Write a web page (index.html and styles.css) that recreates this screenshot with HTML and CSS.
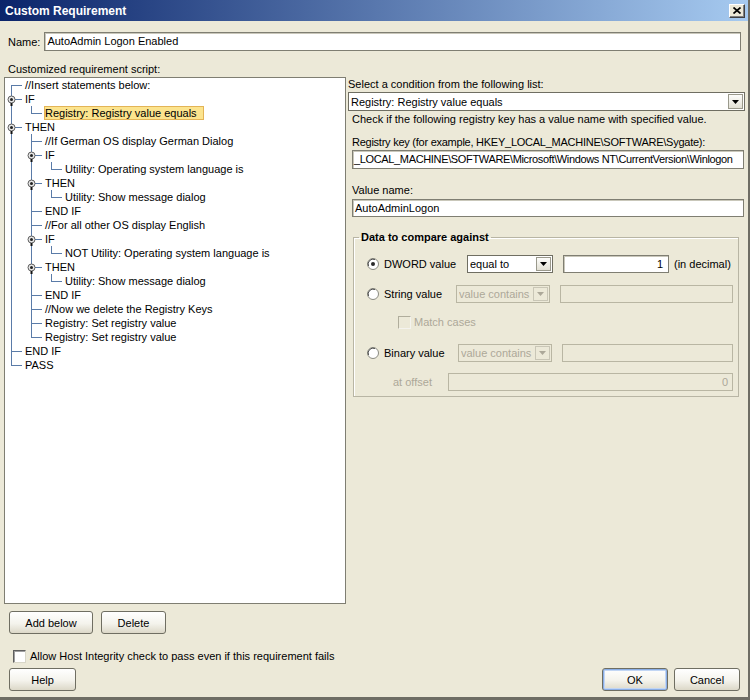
FILE: index.html
```html
<!DOCTYPE html>
<html>
<head>
<meta charset="utf-8">
<title>Custom Requirement</title>
<link rel="stylesheet" href="styles.css">
</head>
<body>
<div class="window">
  <div class="titlebar">
    <span class="title">Custom Requirement</span>
    <span class="close-btn"><svg width="8" height="7" viewBox="0 0 8 7"><path d="M0.5 0.5L7.5 6.5M7.5 0.5L0.5 6.5" stroke="#000" stroke-width="1.7"/></svg></span>
  </div>
  <div class="content">
    <div class="name-row"><span class="lbl">Name:</span><div class="field name-field">AutoAdmin Logon Enabled</div></div>
    <div class="script-label">Customized requirement script:</div>
    <div class="main">
      <div class="tree">
        <div class="row"><span class="g g-f"></span><span class="txt">//Insert statements below:</span></div>
        <div class="row"><span class="g g-v"><svg width="20" height="14" viewBox="0 0 20 14"><rect x="10" y="7" width="7" height="1" fill="#5a7ba8"/><circle cx="6.5" cy="7.5" r="3.5" fill="#e6e6e6" stroke="#5e5e5e"/><circle cx="6.5" cy="7.5" r="1.5" fill="#222"/><rect x="5.5" y="11" width="2" height="3" fill="#111"/></svg></span><span class="txt">IF</span></div>
        <div class="row"><span class="g g-v"></span><span class="g g-l"></span><span class="txt sel">Registry: Registry value equals</span></div>
        <div class="row"><span class="g g-v"><svg width="20" height="14" viewBox="0 0 20 14"><rect x="10" y="7" width="7" height="1" fill="#5a7ba8"/><circle cx="6.5" cy="7.5" r="3.5" fill="#e6e6e6" stroke="#5e5e5e"/><circle cx="6.5" cy="7.5" r="1.5" fill="#222"/><rect x="5.5" y="11" width="2" height="3" fill="#111"/></svg></span><span class="txt">THEN</span></div>
        <div class="row"><span class="g g-v"></span><span class="g g-t"></span><span class="txt">//If German OS display German Dialog</span></div>
        <div class="row"><span class="g g-v"></span><span class="g g-v"><svg width="20" height="14" viewBox="0 0 20 14"><rect x="10" y="7" width="7" height="1" fill="#5a7ba8"/><circle cx="6.5" cy="7.5" r="3.5" fill="#e6e6e6" stroke="#5e5e5e"/><circle cx="6.5" cy="7.5" r="1.5" fill="#222"/><rect x="5.5" y="11" width="2" height="3" fill="#111"/></svg></span><span class="txt">IF</span></div>
        <div class="row"><span class="g g-v"></span><span class="g g-v"></span><span class="g g-l"></span><span class="txt">Utility: Operating system language is</span></div>
        <div class="row"><span class="g g-v"></span><span class="g g-v"><svg width="20" height="14" viewBox="0 0 20 14"><rect x="10" y="7" width="7" height="1" fill="#5a7ba8"/><circle cx="6.5" cy="7.5" r="3.5" fill="#e6e6e6" stroke="#5e5e5e"/><circle cx="6.5" cy="7.5" r="1.5" fill="#222"/><rect x="5.5" y="11" width="2" height="3" fill="#111"/></svg></span><span class="txt">THEN</span></div>
        <div class="row"><span class="g g-v"></span><span class="g g-v"></span><span class="g g-l"></span><span class="txt">Utility: Show message dialog</span></div>
        <div class="row"><span class="g g-v"></span><span class="g g-t"></span><span class="txt">END IF</span></div>
        <div class="row"><span class="g g-v"></span><span class="g g-t"></span><span class="txt">//For all other OS display English</span></div>
        <div class="row"><span class="g g-v"></span><span class="g g-v"><svg width="20" height="14" viewBox="0 0 20 14"><rect x="10" y="7" width="7" height="1" fill="#5a7ba8"/><circle cx="6.5" cy="7.5" r="3.5" fill="#e6e6e6" stroke="#5e5e5e"/><circle cx="6.5" cy="7.5" r="1.5" fill="#222"/><rect x="5.5" y="11" width="2" height="3" fill="#111"/></svg></span><span class="txt">IF</span></div>
        <div class="row"><span class="g g-v"></span><span class="g g-v"></span><span class="g g-l"></span><span class="txt">NOT Utility: Operating system language is</span></div>
        <div class="row"><span class="g g-v"></span><span class="g g-v"><svg width="20" height="14" viewBox="0 0 20 14"><rect x="10" y="7" width="7" height="1" fill="#5a7ba8"/><circle cx="6.5" cy="7.5" r="3.5" fill="#e6e6e6" stroke="#5e5e5e"/><circle cx="6.5" cy="7.5" r="1.5" fill="#222"/><rect x="5.5" y="11" width="2" height="3" fill="#111"/></svg></span><span class="txt">THEN</span></div>
        <div class="row"><span class="g g-v"></span><span class="g g-v"></span><span class="g g-l"></span><span class="txt">Utility: Show message dialog</span></div>
        <div class="row"><span class="g g-v"></span><span class="g g-t"></span><span class="txt">END IF</span></div>
        <div class="row"><span class="g g-v"></span><span class="g g-t"></span><span class="txt">//Now we delete the Registry Keys</span></div>
        <div class="row"><span class="g g-v"></span><span class="g g-t"></span><span class="txt">Registry: Set registry value</span></div>
        <div class="row"><span class="g g-v"></span><span class="g g-l"></span><span class="txt">Registry: Set registry value</span></div>
        <div class="row"><span class="g g-t"></span><span class="txt">END IF</span></div>
        <div class="row"><span class="g g-l"></span><span class="txt">PASS</span></div>
      </div>
      <div class="props">
        <div class="plabel">Select a condition from the following list:</div>
        <div class="combo main-combo"><span class="combo-text">Registry: Registry value equals</span><span class="arrow"><svg width="7" height="4" viewBox="0 0 7 4"><path d="M0 0H7L3.5 4Z" fill="#000"/></svg></span></div>
        <div class="plabel ind desc">Check if the following registry key has a value name with specified value.</div>
        <div class="plabel ind key-label">Registry key (for example, HKEY_LOCAL_MACHINE\SOFTWARE\Sygate):</div>
        <div class="field key-field">_LOCAL_MACHINE\SOFTWARE\Microsoft\Windows NT\CurrentVersion\Winlogon</div>
        <div class="plabel ind vn-label">Value name:</div>
        <div class="field vn-field">AutoAdminLogon</div>
        <fieldset class="group">
          <legend>Data to compare against</legend>
          <div class="grow r1">
            <svg class="radio" width="12" height="12" viewBox="0 0 12 12"><circle cx="6" cy="6" r="5.5" fill="#fff" stroke="#8a8a80"/><path d="M1.5 8A5 5 0 0 1 8 1.5" fill="none" stroke="#505050" stroke-width="1"/><circle cx="6" cy="6" r="2" fill="#2a2a2a"/></svg>
            <span class="lab lab-dword">DWORD value</span>
            <div class="combo sm c-dword"><span class="combo-text">equal to</span><span class="arrow"><svg width="7" height="4" viewBox="0 0 7 4"><path d="M0 0H7L3.5 4Z" fill="#000"/></svg></span></div>
            <div class="field sm f-dword">1</div>
            <span class="unit">(in decimal)</span>
          </div>
          <div class="grow r2">
            <svg class="radio" width="12" height="12" viewBox="0 0 12 12"><circle cx="6" cy="6" r="5.5" fill="#fff" stroke="#8a8a80"/><path d="M1.5 8A5 5 0 0 1 8 1.5" fill="none" stroke="#505050" stroke-width="1"/></svg>
            <span class="lab lab-string">String value</span>
            <div class="combo sm dis c-wide"><span class="combo-text">value contains</span><span class="arrow"><svg width="7" height="4" viewBox="0 0 7 4"><path d="M0 0H7L3.5 4Z" fill="#aca899"/></svg></span></div>
            <div class="field sm dis f-flex"></div>
          </div>
          <div class="grow r3">
            <span class="check dis-check"></span>
            <span class="dis-text">Match cases</span>
          </div>
          <div class="grow r4">
            <svg class="radio" width="12" height="12" viewBox="0 0 12 12"><circle cx="6" cy="6" r="5.5" fill="#fff" stroke="#8a8a80"/><path d="M1.5 8A5 5 0 0 1 8 1.5" fill="none" stroke="#505050" stroke-width="1"/></svg>
            <span class="lab lab-binary">Binary value</span>
            <div class="combo sm dis c-wide"><span class="combo-text">value contains</span><span class="arrow"><svg width="7" height="4" viewBox="0 0 7 4"><path d="M0 0H7L3.5 4Z" fill="#aca899"/></svg></span></div>
            <div class="field sm dis f-flex"></div>
          </div>
          <div class="grow r5">
            <span class="lab lab-offset dis-text">at offset</span>
            <div class="field sm dis f-offset">0</div>
          </div>
        </fieldset>
      </div>
    </div>
    <div class="btn-row">
      <button class="btn w-add">Add below</button>
      <button class="btn w-del">Delete</button>
    </div>
    <div class="check-row"><span class="check"></span><span>Allow Host Integrity check to pass even if this requirement fails</span></div>
    <div class="bottom-row">
      <button class="btn w-help">Help</button>
      <span class="spacer"></span>
      <button class="btn w-ok ok">OK</button>
      <button class="btn w-ok">Cancel</button>
    </div>
  </div>
</div>
</body>
</html>
```

FILE: styles.css
```css
:root {
  --line: #5a7ba8;
  --bg: #ece9d8;
}
* { box-sizing: border-box; }
body {
  margin: 0;
  font-family: "Liberation Sans", Arial, sans-serif;
  font-size: 11px;
  color: #000;
  background: var(--bg);
}
.window {
  width: 750px;
  height: 700px;
  background: var(--bg);
  border-right: 2px solid #6e6d64;
  border-bottom: 3px solid #6e6d64;
  display: flex;
  flex-direction: column;
}
.titlebar {
  height: 21px;
  flex: none;
  background: linear-gradient(to right, #0a246a, #a6caf0);
  display: flex;
  align-items: center;
  justify-content: space-between;
  padding: 0 3px 0 5px;
}
.title {
  color: #fff;
  font-weight: bold;
  font-size: 12px;
}
.close-btn {
  width: 16px;
  height: 14px;
  background: var(--bg);
  border: 1px solid;
  border-color: #fff #404040 #404040 #fff;
  box-shadow: inset -1px -1px 0 #808080;
  display: flex;
  align-items: center;
  justify-content: center;
}
.content {
  flex: 1;
  display: flex;
  flex-direction: column;
  padding: 11px 3px 0 4px;
  min-width: 0;
}
.name-row {
  display: flex;
  align-items: center;
  height: 19px;
  padding-left: 4px;
  margin-right: 4px;
}
.name-row .lbl { margin-right: 4px; }
.field {
  height: 19px;
  background: #fff;
  border: 1px solid #7f7e72;
  box-shadow: inset 1px 1px 0 #c9c7ba;
  padding: 0 2px;
  line-height: 17px;
  white-space: nowrap;
  overflow: hidden;
  min-width: 0;
}
.name-field { flex: 1; }
.script-label {
  margin-top: 11px;
  margin-bottom: 1px;
  line-height: 14px;
  padding-left: 4px;
}
.main {
  display: grid;
  grid-template-columns: 342px minmax(0, 1fr);
  column-gap: 2px;
  height: 527px;
}
.tree {
  background: #fff;
  border: 1px solid #7f7e72;
  overflow: hidden;
}
.row {
  display: flex;
  height: 14px;
  line-height: 14px;
  white-space: nowrap;
}
.g {
  width: 20px;
  height: 14px;
  flex: none;
  display: block;
}
.g svg { display: block; }
.g-v {
  background: linear-gradient(var(--line), var(--line)) 6px 0 / 1px 14px no-repeat;
}
.g-t {
  background:
    linear-gradient(var(--line), var(--line)) 6px 0 / 1px 14px no-repeat,
    linear-gradient(var(--line), var(--line)) 6px 7px / 11px 1px no-repeat;
}
.g-l {
  background:
    linear-gradient(var(--line), var(--line)) 6px 0 / 1px 8px no-repeat,
    linear-gradient(var(--line), var(--line)) 6px 7px / 11px 1px no-repeat;
}
.g-f {
  background:
    linear-gradient(var(--line), var(--line)) 6px 7px / 1px 7px no-repeat,
    linear-gradient(var(--line), var(--line)) 6px 7px / 11px 1px no-repeat;
}
.sel {
  background: #fce48e;
  border: 1px solid #e3b456;
  margin-left: -1px;
  padding-right: 6px;
  line-height: 12px;
}
.props {
  display: flex;
  flex-direction: column;
  min-width: 0;
}
.plabel {
  line-height: 14px;
  white-space: nowrap;
}
.ind { padding-left: 4px; }
.key-label { letter-spacing: -0.25px; }
.combo {
  display: flex;
  align-items: center;
  height: 19px;
  background: #fff;
  border: 1px solid #6f6e62;
  padding-left: 2px;
  white-space: nowrap;
  min-width: 0;
}
.combo-text {
  flex: 1;
  overflow: hidden;
  min-width: 0;
}
.arrow {
  width: 15px;
  height: 15px;
  flex: none;
  border: 1px solid #9a998c;
  background: linear-gradient(#fdfdfb, #e2e0d4);
  display: flex;
  align-items: center;
  justify-content: center;
  margin-right: 1px;
}
.arrow svg { display: block; }
.main-combo { margin-top: 1px; }
.desc { margin-top: 1px; }
.key-label { margin-top: 9px; }
.key-field { margin: 1px 1px 0 4px; letter-spacing: -0.35px; padding-left: 1px; }
.vn-label { margin-top: 14px; }
.vn-field { margin: 2px 1px 0 4px; height: 18px; line-height: 16px; }
.group {
  margin: 13px 6px 0 5px;
  border: 1px solid #b8b5a4;
  box-shadow: inset 1px 1px 0 #fff;
  padding: 0 5px 5px 13px;
  min-width: 0;
}
.group legend {
  font-weight: bold;
  line-height: 14px;
  padding: 0 2px;
  margin-left: -8px;
}
.grow {
  display: flex;
  align-items: center;
  height: 18px;
  white-space: nowrap;
}
.r1 { margin-top: 11px; }
.r2 { margin-top: 12px; }
.r3 { margin-top: 12px; height: 14px; padding-left: 31px; }
.r4 { margin-top: 15px; }
.r5 { margin-top: 11px; padding-left: 26px; }
.radio { flex: none; margin-right: 5px; display: block; }
.lab { flex: none; }
.lab-dword { width: 83px; }
.lab-string { width: 72px; }
.lab-binary { width: 74px; }
.lab-offset { width: 55px; }
.combo.sm { height: 18px; }
.combo.sm .arrow { height: 14px; }
.c-dword { width: 86px; flex: none; }
.c-wide { width: 94px; flex: none; }
.field.sm { height: 18px; line-height: 16px; margin-left: 10px; }
.f-dword { width: 106px; flex: none; text-align: right; padding-right: 5px; }
.unit { margin-left: 5px; }
.f-flex { flex: 1; }
.field.f-offset { flex: 1; margin-left: 0; text-align: right; padding-right: 4px; }
.dis {
  background: var(--bg);
  border-color: #b9b6a3;
  box-shadow: none;
  color: #aca899;
}
.dis .arrow {
  border-color: #c9c6b6;
  background: var(--bg);
}
.dis-text { color: #aca899; }
.check {
  width: 13px;
  height: 13px;
  flex: none;
  background: #fff;
  border: 1px solid;
  border-color: #5f5f5f #d8d6c8 #d8d6c8 #5f5f5f;
  box-shadow: inset 1px 1px 0 #a0a0a0;
  margin-right: 4px;
}
.dis-check {
  background: var(--bg);
  border-color: #b0ad9c #f4f3ee #f4f3ee #b0ad9c;
  box-shadow: none;
  margin-right: 3px;
}
.btn-row {
  display: flex;
  gap: 8px;
  margin-top: 7px;
  padding-left: 5px;
}
.btn {
  height: 23px;
  padding: 0;
  margin: 0;
  border: 1px solid #6f6e62;
  border-radius: 3px;
  background: linear-gradient(#ffffff, #f4f3ec 55%, #dcd8c8);
  font: inherit;
  color: #000;
  display: flex;
  align-items: center;
  justify-content: center;
}
.w-add { width: 84px; }
.w-del { width: 65px; }
.w-help { width: 67px; }
.w-ok { width: 66px; }
.ok { box-shadow: inset 0 0 0 1px #8aaee6, inset 0 0 0 2px #c2d6f4; }
.check-row {
  display: flex;
  align-items: center;
  height: 14px;
  margin-top: 15px;
  padding-left: 9px;
}
.bottom-row {
  display: flex;
  gap: 6px;
  margin-top: 5px;
  padding-left: 5px;
  margin-right: 5px;
}
.spacer { flex: 1; }
```
